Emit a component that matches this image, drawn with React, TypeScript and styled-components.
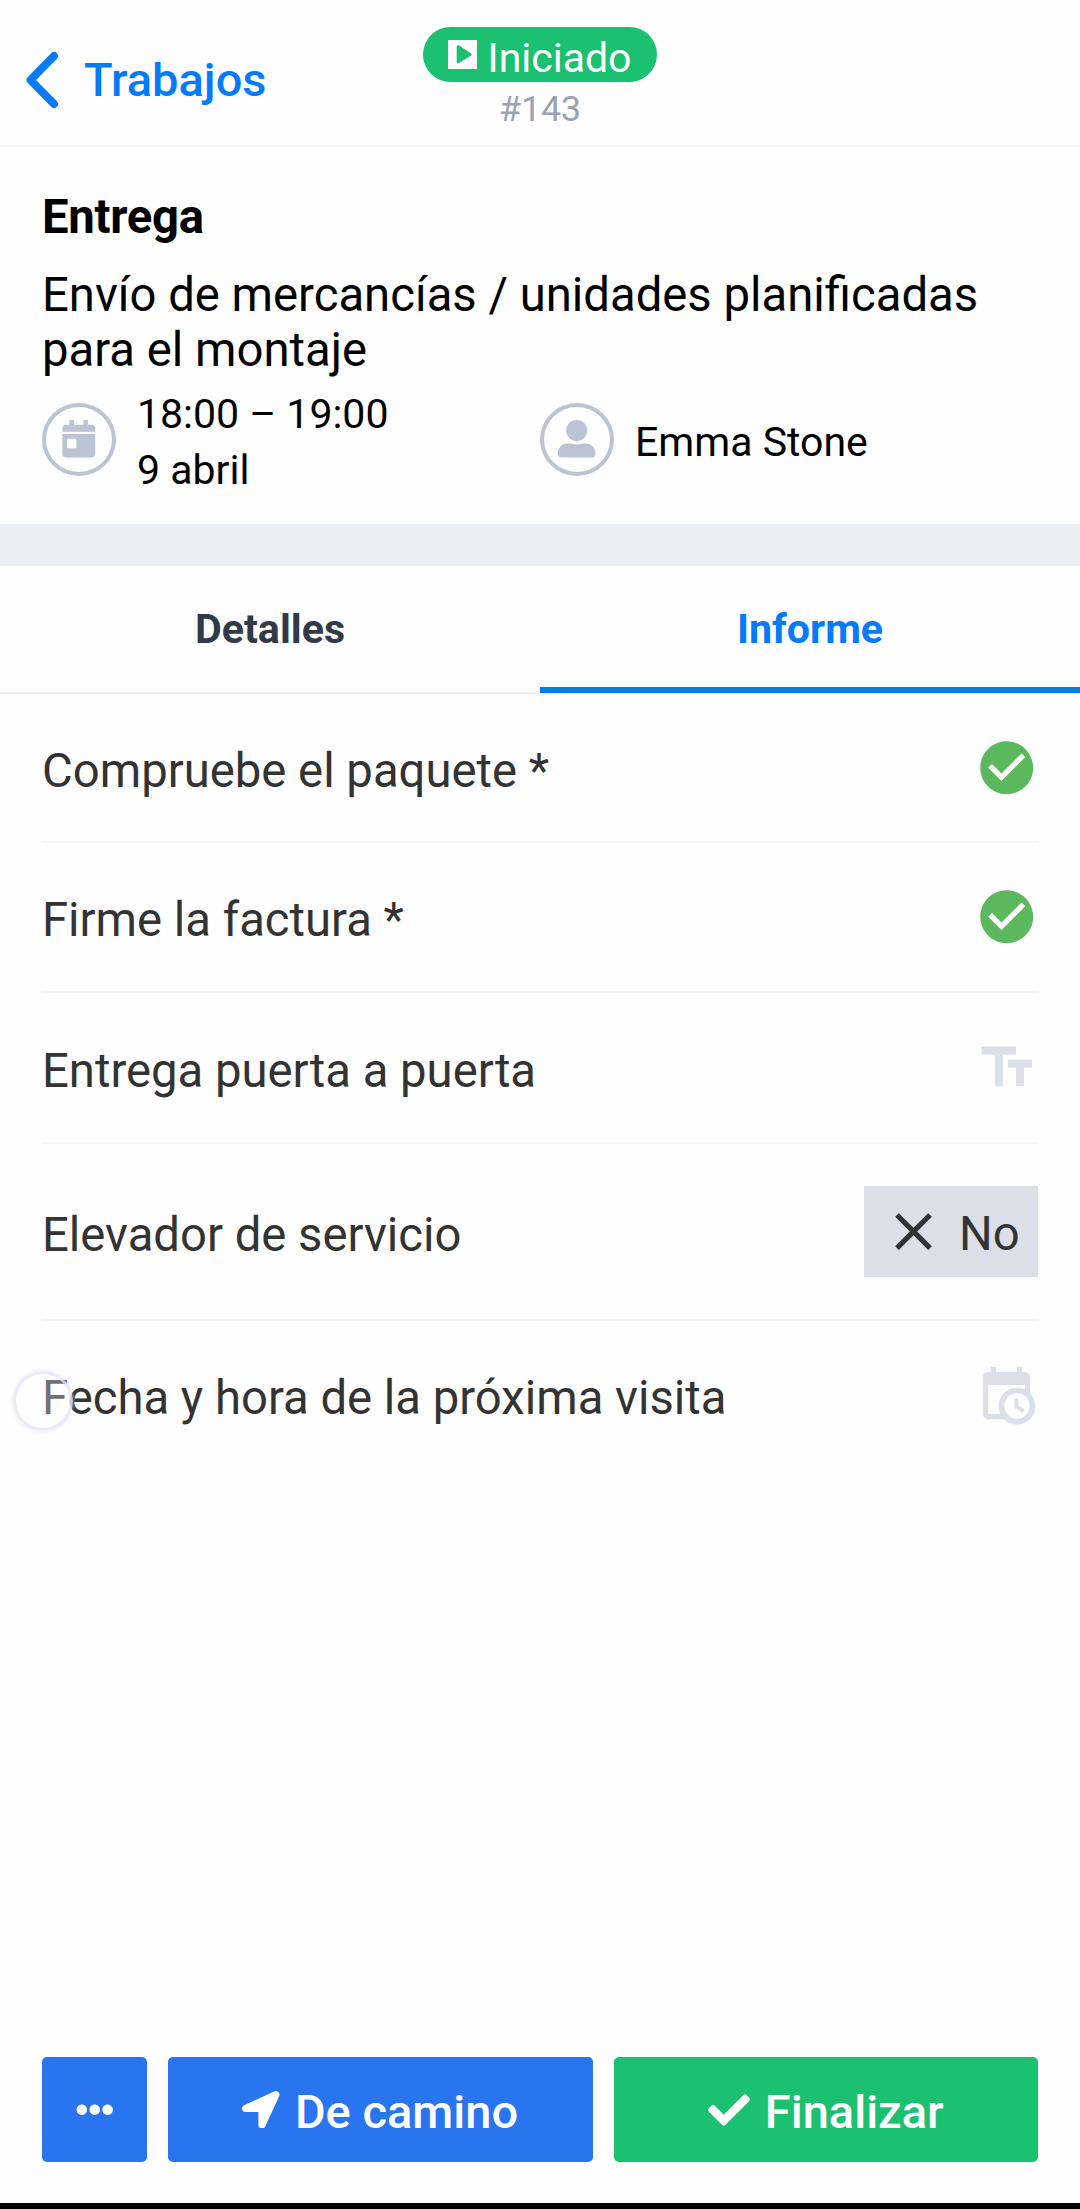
import React from 'react';
import styled, { createGlobalStyle } from 'styled-components';
import { MdCheckCircle, MdClose, MdTextFields } from 'react-icons/md';
import { FaCalendarDay, FaCheck, FaEllipsisH, FaLocationArrow, FaUserAlt } from 'react-icons/fa';

const GlobalStyle = createGlobalStyle`
  * { box-sizing: border-box; }
  body {
    margin: 0;
    background: #fefefe;
    font-family: Roboto, "Noto Sans", sans-serif;
    color: #000;
  }
  svg { display: block; flex: none; }
  button { font-family: inherit; border: 0; padding: 0; margin: 0; }
`;

const Screen = styled.div`
  width: 1080px;
  height: 2209px;
  display: flex;
  flex-direction: column;
  border-bottom: 6px solid #000;
  overflow: hidden;
`;

const Header = styled.header`
  height: 147px;
  flex: none;
  display: grid;
  grid-template-columns: 400px 280px 400px;
  border-bottom: 2px solid #f6f6f7;
`;

const BackButton = styled.button`
  display: flex;
  align-items: center;
  gap: 25px;
  height: 55px;
  margin-top: 52px;
  padding-left: 25px;
  background: none;
  color: #047bfb;
  font-size: 47px;
  font-weight: 500;
  line-height: 56px;
`;

const HeaderCenter = styled.div`
  display: flex;
  flex-direction: column;
  align-items: center;
  padding-top: 27px;
`;

const StatusBadge = styled.div`
  display: flex;
  align-items: center;
  justify-content: center;
  gap: 10px;
  width: 234px;
  height: 55px;
  border-radius: 28px;
  background: #1bc070;
  color: #fff;
  font-size: 41px;
  line-height: 55px;

  span { padding-top: 7px; }
`;

const JobNumber = styled.div`
  margin-top: 6px;
  color: #9aa2b1;
  font-size: 35.7px;
  line-height: 43px;
`;

const Summary = styled.section`
  height: 377px;
  flex: none;
  padding: 42px 42px 0;
`;

const Title = styled.h1`
  margin: 0;
  font-size: 47.25px;
  font-weight: 700;
  line-height: 56px;
  letter-spacing: -0.3px;
`;

const Description = styled.p`
  margin: 23px 0 0;
  font-size: 47.25px;
  line-height: 55px;
`;

const MetaGrid = styled.div`
  display: grid;
  grid-template-columns: 1fr 1fr;
  margin-top: 8px;
`;

const MetaItem = styled.div`
  display: flex;
  align-items: center;
  gap: 21px;
  min-height: 112px;
  font-size: 41px;
  line-height: 56px;
`;

const RoundIcon = styled.div`
  display: flex;
  align-items: center;
  justify-content: center;
  width: 74px;
  height: 73px;
  margin-bottom: 6px;
  border: 4px solid #bac4d4;
  border-radius: 50%;
  color: #bac4d4;
`;

const Separator = styled.div`
  height: 42px;
  flex: none;
  background: #ebeef3;
`;

const Tabs = styled.nav`
  display: grid;
  grid-template-columns: 1fr 1fr;
  height: 128px;
  flex: none;
  border-bottom: 2px solid #ededf0;
`;

const Tab = styled.div<{ $active?: boolean }>`
  position: relative;
  display: flex;
  align-items: center;
  justify-content: center;
  color: ${p => (p.$active ? '#047bfb' : '#333a47')};
  font-size: 41.2px;
  font-weight: 700;

  &::after {
    content: '';
    display: ${p => (p.$active ? 'block' : 'none')};
    position: absolute;
    left: 0;
    right: 0;
    bottom: -1px;
    height: 6px;
    background: #037bfb;
  }
`;

const Fields = styled.main`
  flex: 1;
  padding: 0 42px;
`;

const Field = styled.div<{ $height: number; $last?: boolean }>`
  display: flex;
  align-items: center;
  justify-content: space-between;
  height: ${p => p.$height}px;
  border-bottom: ${p => (p.$last ? 0 : 2)}px solid #f6f6f7;
  color: #333;
  font-size: 47.25px;
  line-height: 56px;
`;

const FieldLabel = styled.span`
  position: relative;
  padding-top: 6px;
`;

const FieldIcon = styled.span<{ $color: string }>`
  display: flex;
  color: ${p => p.$color};
`;

const Answer = styled.div`
  display: flex;
  align-items: center;
  gap: 14px;
  width: 174px;
  height: 91px;
  padding-left: 18px;
  background: #dbdfe8;

  span { padding-top: 5px; }
`;

const TouchMark = styled.i`
  position: absolute;
  left: -29px;
  top: 7px;
  width: 60px;
  height: 60px;
  border: 3px solid rgba(228, 228, 244, 0.75);
  border-radius: 50%;
  background: rgba(255, 255, 255, 0.3);
  box-shadow: 0 0 4px rgba(215, 215, 240, 0.6);
`;

const Actions = styled.footer`
  display: grid;
  grid-template-columns: 105px 1fr 1fr;
  gap: 21px;
  height: 146px;
  flex: none;
  padding: 0 42px 41px;
`;

const ActionButton = styled.button<{ $color: string; $gap?: number }>`
  display: flex;
  align-items: center;
  justify-content: center;
  gap: ${p => p.$gap ?? 0}px;
  border-radius: 5px;
  background: ${p => p.$color};
  color: #fff;
  font-size: 47px;
  font-weight: 500;
  line-height: 56px;

  span { padding-top: 5px; }
`;

const BackChevron = () => (
  <svg width="34" height="58" viewBox="0 0 34 58" fill="none" stroke="currentColor" strokeWidth="8" strokeLinecap="round" strokeLinejoin="round">
    <path d="M29 5 5.5 29 29 53" />
  </svg>
);

const PlayBox = () => (
  <svg width="29" height="29" viewBox="0 0 29 29">
    <path fill="#fff" d="M0 0h29v29H0z" />
    <path fill="#1bc070" d="M8.7 6.6v15.1c0 1.2 1.2 2 2.3 1.3l11.8-7.2c1-.6 1-2 0-2.6L11 5.4C9.900 4.700 8.700 5.500 8.700 6.600z" />
  </svg>
);

const CalendarClock = () => (
  <svg width="63" height="63" viewBox="0 0 24 24" fill="currentColor">
    <path d="M15,13H16.5V15.82L18.94,17.23L18.19,18.53L15,16.69V13M19,8H5V19H9.67C9.24,18.09 9,17.07 9,16A7,7 0 0,1 16,9C17.07,9 18.09,9.24 19,9.67V8M5,21C3.89,21 3,20.1 3,19V5C3,3.89 3.89,3 5,3H6V1H8V3H16V1H18V3H19A2,2 0 0,1 21,5V11.1C22.24,12.36 23,14.09 23,16A7,7 0 0,1 16,23C14.09,23 12.36,22.24 11.1,21H5M16,11.15A4.85,4.85 0 0,0 11.15,16C11.15,18.68 13.32,20.85 16,20.85A4.85,4.85 0 0,0 20.85,16C20.85,13.32 18.68,11.15 16,11.15Z" />
  </svg>
);

const GREEN = '#5cb85c';
const MUTED = '#dbdfe8';

export default function App() {
  return (
    <>
      <GlobalStyle />
      <Screen>
        <Header>
          <BackButton><BackChevron />Trabajos</BackButton>
          <HeaderCenter>
            <StatusBadge><PlayBox /><span>Iniciado</span></StatusBadge>
            <JobNumber>#143</JobNumber>
          </HeaderCenter>
        </Header>

        <Summary>
          <Title>Entrega</Title>
          <Description>Envío de mercancías / unidades planificadas para el montaje</Description>
          <MetaGrid>
            <MetaItem>
              <RoundIcon><FaCalendarDay size={37.5} /></RoundIcon>
              <div>18:00 – 19:00<br />9 abril</div>
            </MetaItem>
            <MetaItem>
              <RoundIcon><FaUserAlt size={37.5} /></RoundIcon>
              <div>Emma Stone</div>
            </MetaItem>
          </MetaGrid>
        </Summary>

        <Separator />

        <Tabs>
          <Tab>Detalles</Tab>
          <Tab $active>Informe</Tab>
        </Tabs>

        <Fields>
          <Field $height={149}>
            <FieldLabel>Compruebe el paquete *</FieldLabel>
            <FieldIcon $color={GREEN}><MdCheckCircle size={63.5} /></FieldIcon>
          </Field>
          <Field $height={150}>
            <FieldLabel>Firme la factura *</FieldLabel>
            <FieldIcon $color={GREEN}><MdCheckCircle size={63.5} /></FieldIcon>
          </Field>
          <Field $height={151}>
            <FieldLabel>Entrega puerta a puerta</FieldLabel>
            <FieldIcon $color={MUTED}><MdTextFields size={63.5} /></FieldIcon>
          </Field>
          <Field $height={177}>
            <FieldLabel>Elevador de servicio</FieldLabel>
            <Answer><MdClose size={63} /><span>No</span></Answer>
          </Field>
          <Field $height={148} $last>
            <FieldLabel>Fecha y hora de la próxima visita<TouchMark /></FieldLabel>
            <FieldIcon $color={MUTED}><CalendarClock /></FieldIcon>
          </Field>
        </Fields>

        <Actions>
          <ActionButton $color="#2974ef" aria-label="Más"><FaEllipsisH size={37.5} /></ActionButton>
          <ActionButton $color="#2974ef" $gap={15}><FaLocationArrow size={37.5} /><span>De camino</span></ActionButton>
          <ActionButton $color="#1bc070" $gap={15}><FaCheck size={42} /><span>Finalizar</span></ActionButton>
        </Actions>
      </Screen>
    </>
  );
}
